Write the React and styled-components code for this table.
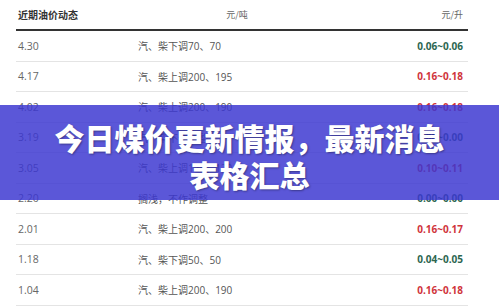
import React from "react";
import styled, { createGlobalStyle } from "styled-components";

const rows = [
  { date: "4.30", note: "汽、柴下调70、70", range: "0.06~0.06", up: false },
  { date: "4.17", note: "汽、柴上调200、195", range: "0.16~0.18", up: true },
  { date: "4.02", note: "汽、柴上调200、190", range: "0.16~0.18", up: true },
  { date: "3.19", note: "汽、柴不作调整", range: "0.00~0.00", up: false },
  { date: "3.05", note: "汽、柴上调125、120", range: "0.10~0.11", up: true },
  { date: "2.20", note: "搁浅，不作调整", range: "0.00~0.00", up: false },
  { date: "2.01", note: "汽、柴上调200、200", range: "0.16~0.17", up: true },
  { date: "1.18", note: "汽、柴下调50、50", range: "0.04~0.05", up: false },
  { date: "1.04", note: "汽、柴上调200、190", range: "0.16~0.18", up: true },
];

const GlobalStyle = createGlobalStyle`
  html, body {
    margin: 0;
    padding: 0;
    background: #fff;
  }
  body {
    font-family: "Open Sans", "Noto Sans CJK SC", sans-serif;
  }
`;

const Page = styled.div`
  position: relative;
  width: 499px;
  height: 307px;
  overflow: hidden;
  background: #fff;
`;

const Table = styled.div`
  width: 452px;
  margin-left: 16px;
`;

const Row = styled.div`
  display: grid;
  grid-template-columns: 120px 1fr 130px;
  align-items: center;
  height: ${(p) => (p.head ? "29px" : "29.5px")};
  border-bottom: ${(p) => (p.head ? "2px solid #333" : "1px solid #e4e4e4")};
`;

const HeadCell = styled.div`
  padding: 0 ${(p) => (p.right ? "5px" : "2px")};
  font-family: "Noto Sans CJK SC", sans-serif;
  font-size: ${(p) => (p.strong ? "10px" : "9px")};
  font-weight: ${(p) => (p.strong ? 700 : 400)};
  color: ${(p) => (p.strong ? "#333" : "#666")};
  text-align: ${(p) => (p.right ? "right" : p.center ? "center" : "left")};
  margin-top: -1px;
`;

const DateCell = styled.div`
  padding-left: 2px;
  font-size: 10.5px;
  color: #666;
`;

const NoteCell = styled.div`
  padding-left: 2px;
  font-family: "Open Sans", "Noto Sans CJK SC", sans-serif;
  font-size: 10px;
  color: #555;
`;

const RangeCell = styled.div`
  padding-right: 5px;
  text-align: right;
  font-size: 10px;
  font-weight: 700;
  color: ${(p) => (p.up ? "#d0343c" : "#2c6650")};
`;

const Banner = styled.div`
  position: absolute;
  left: 0;
  right: 0;
  top: 105px;
  height: 95px;
  box-sizing: border-box;
  padding-top: 6px;
  background: rgba(60, 55, 208, 0.84);
  display: flex;
  flex-direction: column;
  align-items: center;
  justify-content: center;
`;

const Title = styled.div`
  font-family: "Noto Sans CJK SC", sans-serif;
  font-weight: 900;
  font-size: 30px;
  line-height: 37px;
  color: #fff;
  text-align: center;
  text-shadow: 1px 1px 2px rgba(0, 0, 0, 0.35);
`;

export default function App() {
  return (
    <>
      <GlobalStyle />
      <Page>
        <Table>
          <Row head>
            <HeadCell strong>近期油价动态</HeadCell>
            <HeadCell center>元/吨</HeadCell>
            <HeadCell right>元/升</HeadCell>
          </Row>
          {rows.map((r) => (
            <Row key={r.date}>
              <DateCell>{r.date}</DateCell>
              <NoteCell>{r.note}</NoteCell>
              <RangeCell up={r.up}>{r.range}</RangeCell>
            </Row>
          ))}
        </Table>
        <Banner>
          <Title>今日煤价更新情报，最新消息</Title>
          <Title>表格汇总</Title>
        </Banner>
      </Page>
    </>
  );
}
